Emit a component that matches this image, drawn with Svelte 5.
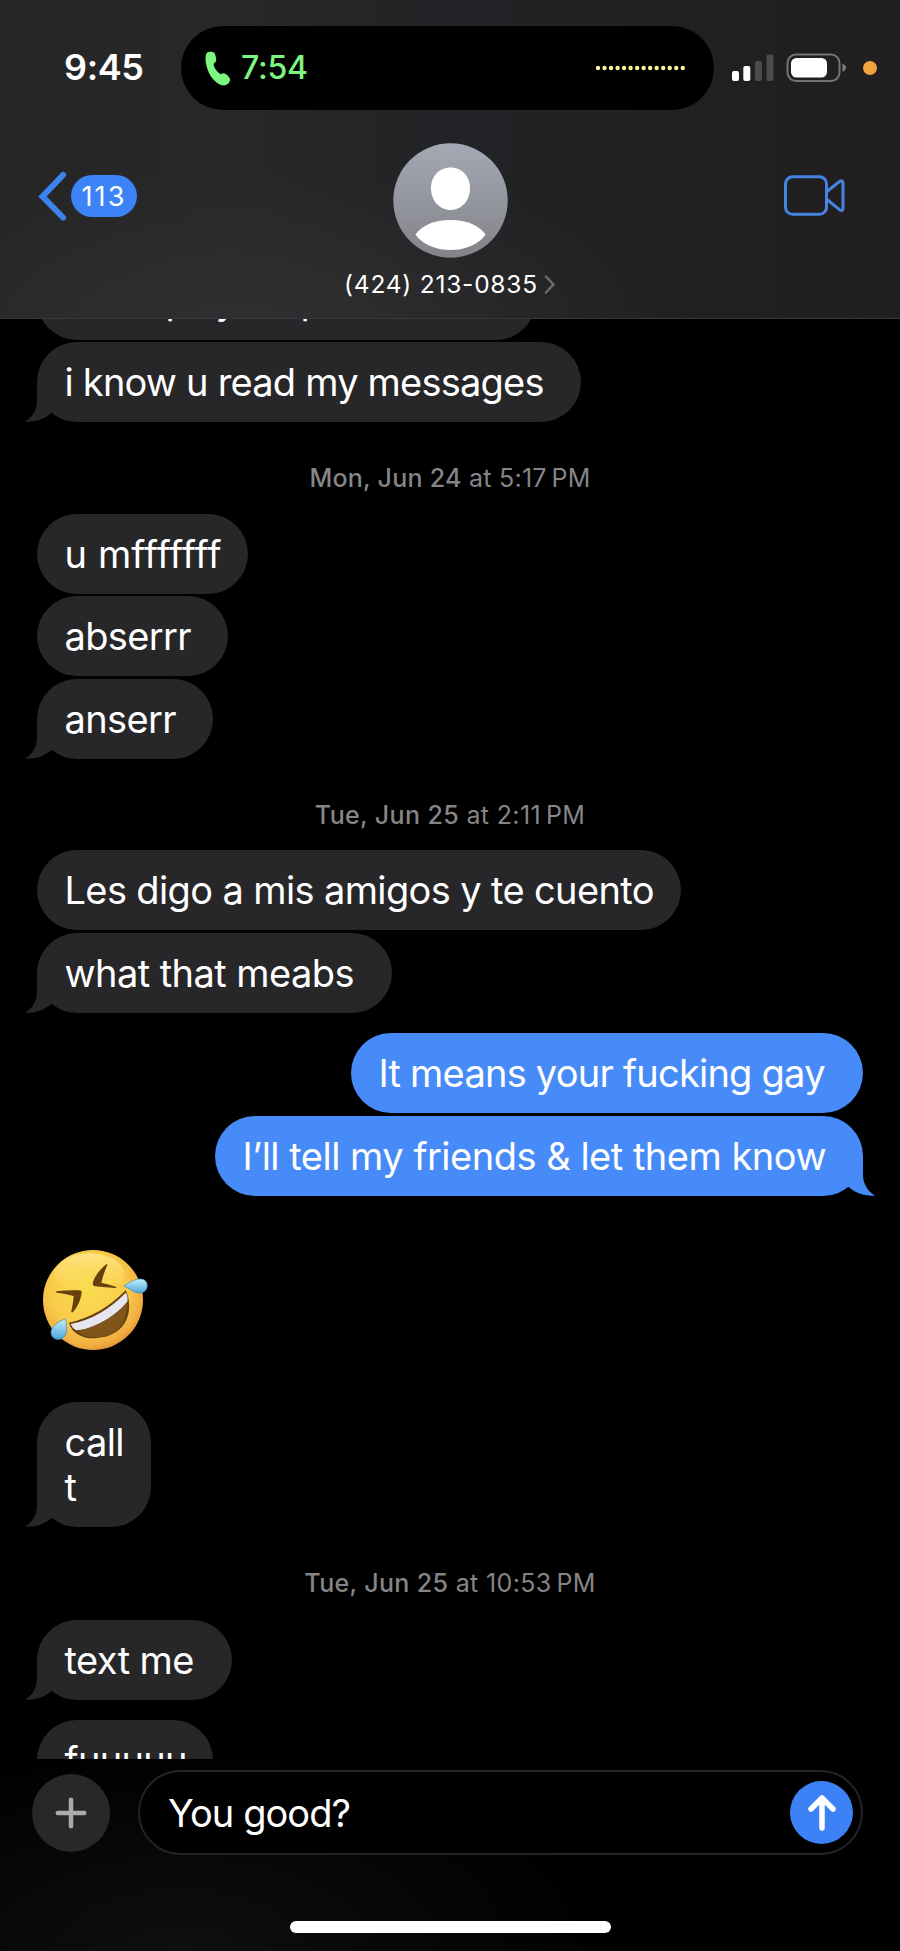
<script>
  const thread = [
    { text: 'i know u read my messages', ink: 480, width: 544, gap: 2.5, tail: true },
    { day: 'Mon, Jun 24', time: '5:17\u202fPM', ink: 281 },
    { text: 'u mfffffff', ink: 157, width: 211, gap: 21 },
    { text: 'abserrr', ink: 127, width: 191, gap: 2.3 },
    { text: 'anserr', ink: 112, width: 176, gap: 2.4, tail: true },
    { day: 'Tue, Jun 25', time: '2:11\u202fPM', ink: 270 },
    { text: 'Les digo a mis amigos y te cuento', ink: 590, width: 644, gap: 20.7 },
    { text: 'what that meabs', ink: 290, width: 355, gap: 2.4, tail: true },
    { text: 'It means your fucking gay', ink: 447, width: 512, gap: 20.5, mine: true },
    { text: 'I’ll tell my friends & let them know', ink: 584, width: 648, gap: 2.5, mine: true, tail: true },
    { emoji: true },
    { text: 'call\nt', ink: 60, width: 114, gap: 52.2, tail: true },
    { day: 'Tue, Jun 25', time: '10:53\u202fPM', ink: 291 },
    { text: 'text me', ink: 130, width: 195, gap: 22, tail: true },
    { text: 'fuuuuu', ink: 123, width: 176, gap: 20.3 }
  ];
  const dots = Array.from({ length: 14 }, (_, i) => i);

  // Tracks a label so that its longest line spans the given width.
  function track(node, width) {
    const longest = Math.max(...node.textContent.split('\n').map((l) => l.trim().length));
    const natural = node.getBoundingClientRect().width;
    node.style.letterSpacing = `${(width - natural) / (longest - 1)}px`;
  }
</script>

<div class="phone">
  <header>
    <div class="status">
      <div class="clock"><span use:track={80}>9:45</span></div>
      <div class="island">
        <svg class="handset" width="27" height="36" viewBox="45 35 81 108">
          <path d="M56 38C62 36 72 37 74 42 77 50 80 60 78 66 76 70 70 72 71 77 73 87 82 98 90 103 94 105 97 102 101 102 107 103 116 110 120 118 122 124 117 134 106 138 92 141 70 126 58 103 48 84 44 60 48 46 50 41 52 39 56 38Z" />
        </svg>
        <span class="duration"><span use:track={67}>7:54</span></span>
        <svg class="wave" width="90" height="6" viewBox="0 0 90 6">
          {#each dots as i}<circle cx={3 + i * 6.52} cy="3" r="2.2" />{/each}
        </svg>
      </div>
      <svg class="signal" width="42" height="28" viewBox="0 0 42 28">
        <rect x="0" y="17" width="7" height="10" rx="2" />
        <rect x="11.3" y="12" width="7" height="15" rx="2" />
        <rect class="off" x="23" y="7" width="7" height="20" rx="2" />
        <rect class="off" x="34.5" y="0.5" width="7" height="26.5" rx="2" />
      </svg>
      <svg class="battery" width="62" height="30" viewBox="0 0 62 30">
        <rect x="1.5" y="1.5" width="52" height="26.5" rx="8.5" fill="none" stroke="#747474" stroke-width="2" />
        <rect x="5" y="5" width="36" height="19.5" rx="5.5" fill="#fff" />
        <path d="M56.5 10.500Q60 12.500 60 14.800T56.500 19Z" fill="#808080" />
      </svg>
      <i class="mic"></i>
    </div>
    <div class="nav">
      <div class="back">
        <svg width="30" height="52" viewBox="0 0 30 52"><path d="M26 5 5.500 26.500l20.500 21" /></svg>
        <span class="badge"><span use:track={43}>113</span></span>
      </div>
      <div class="contact">
        <svg width="115" height="115" viewBox="0 0 115 115">
          <defs><linearGradient id="av" x2="0" y2="1"><stop stop-color="#a5a9b5" /><stop offset="1" stop-color="#838388" /></linearGradient></defs>
          <circle cx="57.5" cy="57.5" r="57.2" fill="url(#av)" />
          <path d="M57.500 24.500c11.500 0 19.500 9 19.500 20.500 0 12.500-8.500 22-19.500 22S38 57.500 38 45c0-11.500 8-20.500 19.500-20.500Z" fill="#fff" />
          <path d="M22.500 91.500C28 83 41 77 57.500 77s29.500 6 35 14.500C86 101 73 107 57.500 107S29 101 22.500 91.500Z" fill="#fff" />
        </svg>
        <div class="name">
          <span use:track={193}>(424) 213-0835</span>
          <svg width="12" height="19" viewBox="0 0 12 19"><path d="M2 1.500 9.500 9.500 2 17.500" /></svg>
        </div>
      </div>
      <svg class="video" width="62" height="42" viewBox="0 0 62 42">
        <rect x="1.5" y="1.8" width="41" height="37.5" rx="7" />
        <path d="M43 16.500 55.500 6.500Q59 4.500 59 8v25.500q0 3.200-3.500 1.200L43 24.500" />
      </svg>
    </div>
  </header>

  <main>
    <div class="bubble first"><span class="p1">p</span><span class="p2">y</span><span class="p3">p</span></div>
    {#each thread as m}
      {#if m.emoji}
        <svg class="emoji" width="107" height="100" viewBox="69 60 321 300">
          <defs>
            <radialGradient id="face" cx=".45" cy=".4" r=".64"><stop stop-color="#fbdc4e" /><stop offset=".6" stop-color="#f9cb4a" /><stop offset=".86" stop-color="#f2ae42" /><stop offset="1" stop-color="#dd8d30" /></radialGradient>
            <linearGradient id="shine" x2="0" y2="1"><stop stop-color="#fff3a8" stop-opacity=".6" /><stop offset="1" stop-color="#ffe45c" stop-opacity="0" /></linearGradient>
            <linearGradient id="tear" x2="0" y2="1"><stop stop-color="#c7f1fc" /><stop offset="1" stop-color="#4ba5dc" /></linearGradient>
          </defs>
          <circle cx="219" cy="210" r="150" fill="url(#face)" />
          <ellipse cx="208" cy="133" rx="105" ry="63" fill="url(#shine)" />
          <g fill="#66400d">
            <path d="M259 103C242 116 221 141 218 161q0 7 7 8 32 4 62 5 5-1 0-4-22-8-43-12 6-27 18-52 1-5-3-3Z" />
            <path d="M110 184q36-5 70-3 6 1 5 7c-3 23-13 43-26 58-3 3-6 1-5-3 4-17 6-31 7-45-17-5-35-8-50-10-5-1-5-3-1-4Z" />
            <path d="M147 278Q242 258 317 181C341 230 330 320 224 325 182 325 155 308 147 278Z" />
          </g>
          <path d="M152 282Q244 264 317 188q8 10 5 27-65 78-154 86-11-6-16-19Z" fill="#e7e5ee" />
          <path d="M173 303q45-10 90-37 30-18 59-50-2 106-98 106-32 0-51-19Z" fill="#80541a" />
          <g fill="url(#tear)" stroke="#3d8dbb" stroke-width="2">
            <path d="M311 168C331 155 345 147 363 147c25 1 24 35 4 41-22 6-35-12-56-20Z" />
            <path d="M136 266c-24 11-44 24-43 43 2 24 36 26 44 4 5-16 3-30-1-47Z" />
          </g>
        </svg>
      {:else if m.day}
        <div class="date"><span use:track={m.ink}><b>{m.day}</b> at {m.time}</span></div>
      {:else}
        <div class="bubble" class:mine={m.mine} style="width: {m.width}px; margin-top: {m.gap}px">
          <span use:track={m.ink}>{m.text}</span>
          {#if m.tail}
            <svg class="tail" width="40" height="42" viewBox="0 0 40 42">
              <path d="M12 2V21C12 29 8 37 0 41.500 10 42.500 20 39 27 32.500L36 22Z" />
            </svg>
          {/if}
        </div>
      {/if}
    {/each}
  </main>

  <footer>
    <div class="compose">
      <div class="plus"><svg width="32" height="32" viewBox="0 0 32 32"><path d="M16 2.800v26.400M2.800 16h26.400" /></svg></div>
      <div class="field">
        <span use:track={183}>You good?</span>
        <div class="send"><svg width="34" height="40" viewBox="0 0 34 40"><path d="M17 35V6M6 16 17 5l11 11" /></svg></div>
      </div>
    </div>
    <div class="home"></div>
  </footer>
</div>

<style>
  :global(body) { margin: 0; background: #000; }
  .phone {
    width: 900px; height: 1951px; overflow: hidden; display: flex; flex-direction: column;
    background: #000; color: #fff; font-family: Inter, "Liberation Sans", sans-serif;
  }
  svg { display: block; flex: none; }
  span { white-space: nowrap; }
  header {
    height: 319px; flex: none; box-sizing: border-box; border-bottom: 1px solid #373638;
    background:
      radial-gradient(ellipse 430px 150px at 240px 319px, #302e31, #302e3100),
      linear-gradient(90deg, #252525, #282828 25%, #222326 50%, #202122 72%, #211e20);
  }
  .status { display: flex; padding-top: 26px; height: 84px; align-items: center; }
  .clock { width: 117px; padding: 0 0 2px 64px; font-size: 36px; font-weight: 600; line-height: 44px; }
  .clock span, .duration span, .badge span, .name span, .date span, .bubble span, .field > span { display: inline-block; }
  .island { width: 533px; height: 84px; box-sizing: border-box; border-radius: 42px; background: #000; display: flex; align-items: center; padding: 0 29px 0 24px; }
  .handset { fill: #7cf681; margin-top: 2px; }
  .duration { font-size: 32px; font-weight: 500; color: #7cf681; margin-left: 9px; line-height: 40px; }
  .wave { margin-left: auto; fill: #f7f595; }
  .signal { margin-left: 18px; fill: #fff; }
  .off { fill: #4b4b4b; }
  .battery { margin-left: 12px; }
  .mic { width: 14px; height: 14px; border-radius: 50%; background: #f1a33c; margin-left: 15px; }
  .nav { display: grid; grid-template-columns: 1fr 260px 1fr; margin-top: 33px; }
  .back { display: flex; align-items: center; height: 52px; margin: 27px 0 0 37px; }
  .back path { fill: none; stroke: #3d83ee; stroke-width: 6; stroke-linecap: round; stroke-linejoin: miter; }
  .badge { width: 66px; height: 42px; border-radius: 21px; background: #3b83f7; margin-left: 4px; text-align: center; font-size: 27px; line-height: 43px; }
  .contact { display: flex; flex-direction: column; align-items: center; }
  .name { display: flex; align-items: center; gap: 6px; margin: 10px 0 0; font-size: 24.5px; line-height: 32px; }
  .name path { fill: none; stroke: #6a696c; stroke-width: 2.5; stroke-linecap: round; }
  .video { justify-self: end; margin: 32px 54px 0 0; fill: none; stroke: #4684e4; stroke-width: 3; stroke-linejoin: round; }
  main { height: 1440px; flex: none; overflow: hidden; display: flex; flex-direction: column; padding: 0 37px; }
  .bubble {
    position: relative; flex: none; box-sizing: border-box; padding: 18px 0 17px 27.5px; border-radius: 40px;
    background: #272629; fill: #272629; font-size: 38px; line-height: 45px; align-self: flex-start;
  }
  .bubble > span { white-space: pre; }
  .bubble.first { width: 499px; margin-top: -59.5px; display: flex; }
  .p1 { margin-left: 101px; width: 50px; }
  .p2 { width: 85px; }
  .bubble.mine { align-self: flex-end; background: #478bf8; fill: #478bf8; }
  .tail { position: absolute; left: -12px; bottom: 0; }
  .mine .tail { left: auto; right: -12px; transform: scaleX(-1); }
  .date { flex: none; height: 30px; margin-top: 41px; line-height: 30px; font-size: 25px; color: #858487; text-align: center; }
  .date b { font-weight: 500; }
  .emoji { margin: 54px 0 0 6px; }
  footer { height: 192px; flex: none; background: radial-gradient(ellipse 430px 210px at 180px 192px, #0f0f10, #0f0f1000); }
  .compose { display: flex; align-items: center; padding: 11px 37px 0 32px; height: 85px; }
  .plus { width: 78px; height: 78px; border-radius: 50%; background: #282828; display: grid; place-items: center; }
  .plus path { stroke: #aaa; stroke-width: 4.5; stroke-linecap: round; }
  .field { flex: 1; height: 85px; box-sizing: border-box; margin-left: 28px; border: 2px solid #242426; border-radius: 43px; background: #000; display: flex; align-items: center; justify-content: space-between; padding: 0 8px 0 28px; font-size: 38px; line-height: 46px; }
  .send { width: 63px; height: 63px; border-radius: 50%; background: #3c82f6; display: grid; place-items: center; }
  .send path { fill: none; stroke: #fff; stroke-width: 5.5; stroke-linecap: round; stroke-linejoin: round; }
  .home { width: 321px; height: 12px; border-radius: 6px; background: #fff; margin: 66px auto 0; }
</style>
